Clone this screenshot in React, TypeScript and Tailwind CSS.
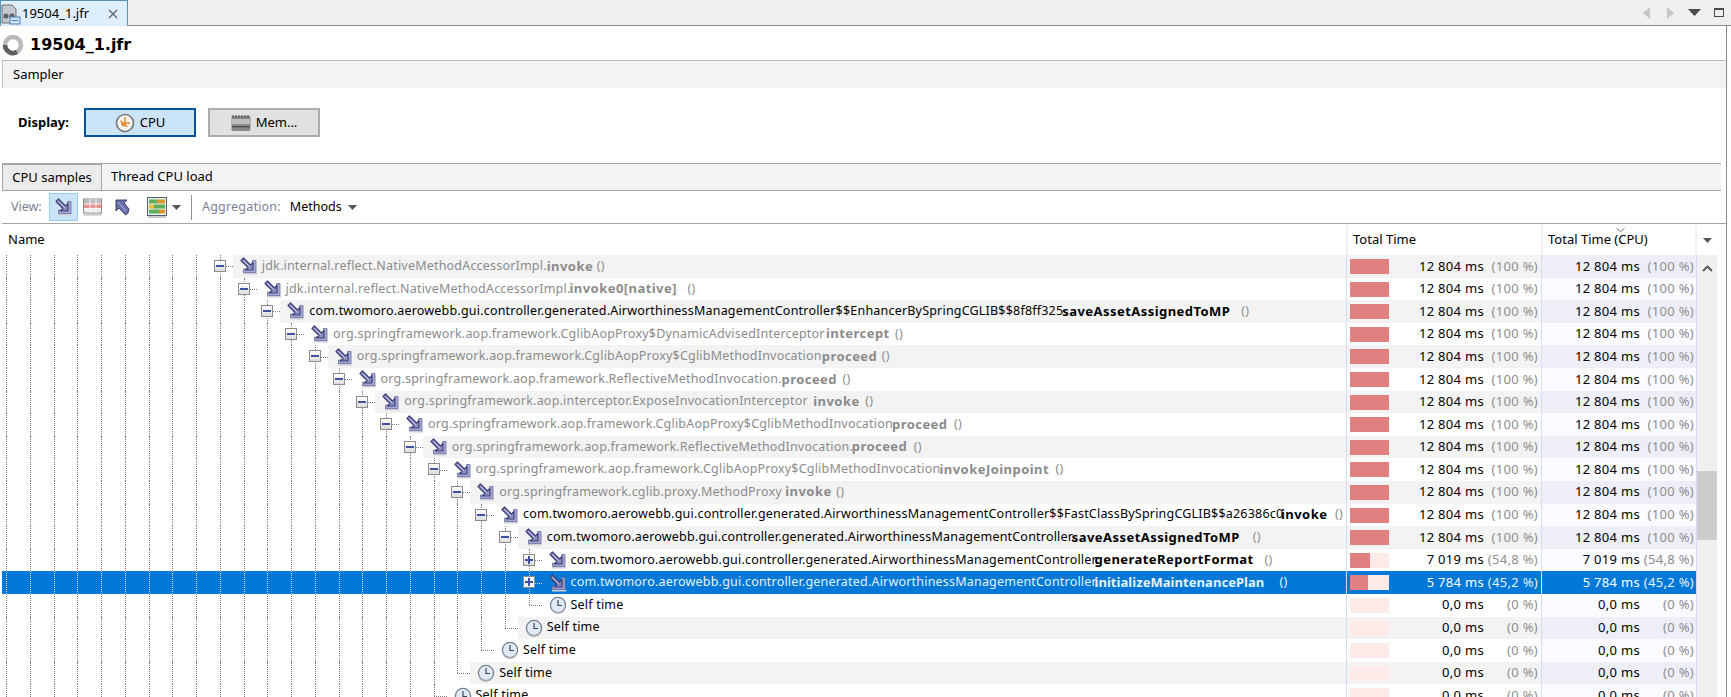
import React from 'react'

type Row = {
  level: number
  prefix?: string
  method?: string
  prefixW?: string
  methodW?: string
  dim?: boolean
  open?: boolean
  self?: boolean
  time?: string
  pct?: string
  fill?: string
}

const pkg = 'com.twomoro.aerowebb.gui.controller.generated.AirworthinessManagementController'
const aop = 'org.springframework.aop.framework.'

const rows: Row[] = [
  { level: 9, prefix: 'jdk.internal.reflect.NativeMethodAccessorImpl.', method: 'invoke', prefixW: 'w-[285px]', methodW: 'w-[50px]', dim: true, open: true },
  { level: 10, prefix: 'jdk.internal.reflect.NativeMethodAccessorImpl.', method: 'invoke0[native]', prefixW: 'w-[284px]', methodW: 'w-[118px]', dim: true, open: true },
  { level: 11, prefix: pkg + '$$EnhancerBySpringCGLIB$$8f8ff325', method: 'saveAssetAssignedToMP', prefixW: 'w-[753px]', methodW: 'w-[179px]', open: true },
  { level: 12, prefix: aop + 'CglibAopProxy$DynamicAdvisedInterceptor', method: 'intercept', prefixW: 'w-[493px]', methodW: 'w-[69px]', dim: true, open: true },
  { level: 13, prefix: aop + 'CglibAopProxy$CglibMethodInvocation', method: 'proceed', prefixW: 'w-[465px]', methodW: 'w-[60px]', dim: true, open: true },
  { level: 14, prefix: aop + 'ReflectiveMethodInvocation.', method: 'proceed', prefixW: 'w-[401px]', methodW: 'w-[61px]', dim: true, open: true },
  { level: 15, prefix: 'org.springframework.aop.interceptor.ExposeInvocationInterceptor', method: 'invoke', prefixW: 'w-[409px]', methodW: 'w-[52px]', dim: true, open: true },
  { level: 16, prefix: aop + 'CglibAopProxy$CglibMethodInvocation', method: 'proceed', prefixW: 'w-[464px]', methodW: 'w-[62px]', dim: true, open: true },
  { level: 17, prefix: aop + 'ReflectiveMethodInvocation.', method: 'proceed', prefixW: 'w-[400px]', methodW: 'w-[62px]', dim: true, open: true },
  { level: 18, prefix: aop + 'CglibAopProxy$CglibMethodInvocation', method: 'invokeJoinpoint', prefixW: 'w-[464px]', methodW: 'w-[116px]', dim: true, open: true },
  { level: 19, prefix: 'org.springframework.cglib.proxy.MethodProxy', method: 'invoke', prefixW: 'w-[286px]', methodW: 'w-[51px]', dim: true, open: true },
  { level: 20, prefix: pkg + '$$FastClassBySpringCGLIB$$a26386c0', method: 'invoke', prefixW: 'w-[758px]', methodW: 'w-[54px]', open: true },
  { level: 21, prefix: pkg + '.', method: 'saveAssetAssignedToMP', prefixW: 'w-[525px]', methodW: 'w-[181px]', open: true },
  { level: 22, prefix: pkg + '.', method: 'generateReportFormat', prefixW: 'w-[524px]', methodW: 'w-[170px]', time: '7 019 ms', pct: '(54,8 %)', fill: 'w-[20px]' },
  { level: 22, prefix: pkg + '.', method: 'initializeMaintenancePlan', prefixW: 'w-[524px]', methodW: 'w-[185px]', time: '5 784 ms', pct: '(45,2 %)', fill: 'w-[18px]' },
  { level: 22, self: true },
  { level: 21, self: true },
  { level: 20, self: true },
  { level: 19, self: true },
  { level: 18, self: true },
]

const MethodIcon = ({ hot = false }: { hot?: boolean }) => (
  <svg width="18" height="18" viewBox="0 0 18 18" className="shrink-0">
    <rect x="3" y="15.5" width="14" height="2" fill="#cfcfd8" />
    <path d="M16 3.5V15.5H3.5V12H12.5V3.5Z" fill={hot ? '#9a9dcc' : '#a7a9d2'} stroke="#6a6da3" strokeWidth="0.8" />
    <path d="M1 3.5L3.5 1L10.5 8L13 5.5V13H5.5L8 10.5Z" fill={hot ? '#7d80b8' : '#8a8dc0'} stroke="#3f4278" strokeWidth="1.2" strokeLinejoin="round" />
    <path d="M3.5 3.5L10 10" stroke="#c9cbe8" strokeWidth="1" />
  </svg>
)

const ClockIcon = () => (
  <svg width="18" height="18" viewBox="0 0 18 18" className="shrink-0">
    <circle cx="9" cy="9" r="7.6" fill="#dfeaf6" stroke="#78818e" strokeWidth="1.3" />
    <path d="M3 14a7.6 7.6 0 0 0 12 0" fill="none" stroke="#a8acb2" strokeWidth="1.5" />
    <path d="M9 4V9.5H13" fill="none" stroke="#3d4650" strokeWidth="1.2" />
  </svg>
)

const TreeBox = ({ open, selected }: { open?: boolean; selected?: boolean }) => (
  <span className={`absolute left-[-6px] top-[5px] w-[12px] h-[12px] border border-[#8c8c8c] flex items-center justify-center ${selected ? 'bg-white' : 'bg-gradient-to-b from-white to-[#dcdcdc]'}`}>
    <span className="relative block w-[8px] h-[2px] bg-[#3f51a0]">
      {!open && <span className="absolute left-[3px] top-[-3px] w-[2px] h-[8px] bg-[#3f51a0]" />}
    </span>
  </span>
)

const Bar = ({ fill }: { fill: string }) => (
  <div className="absolute left-[3px] top-[4px] w-[39px] h-[15px] bg-[#ffeaea]">
    <div className={`h-full bg-[#e08080] ${fill}`} />
  </div>
)

const TreeRow = ({ row, index }: { row: Row; index: number }) => {
  const selected = index === 14
  const stripe = index % 2 === 0
  const time = row.time ?? (row.self ? '0,0 ms' : '12 804 ms')
  const pct = row.pct ?? (row.self ? '(0 %)' : '(100 %)')
  const fill = row.fill ?? (row.self ? 'w-0' : 'w-full')
  const nameBg = selected ? 'bg-[#0078d7]' : stripe ? 'bg-[#f3f3f3]' : 'bg-white'
  const line = selected ? 'border-[#cfe0f2]' : 'border-[#7d7d7d]'
  const textColor = selected ? 'text-[#e6f2fc]' : row.dim ? 'text-[#8b8b8b]' : 'text-black'
  const numColor = selected ? 'text-white' : 'text-black'
  const pctColor = selected ? 'text-[#e6f2fc]' : 'text-[#8e8e8e]'

  return (
    <div className={`flex h-[22.6px] ${selected ? 'bg-[#0078d7]' : ''}`}>
      <div className="flex w-[1344px] shrink-0 overflow-hidden pl-[4px]">
        {Array.from({ length: row.level }).map((_, i) => (
          <span key={i} className={`w-[23.75px] shrink-0 border-l border-dotted ${line}`} />
        ))}
        <span className="relative w-[13px] shrink-0">
          <span className={`absolute left-0 top-0 border-l border-dotted ${line} ${row.self ? 'h-1/2' : 'h-full'}`} />
          <span className={`absolute left-0 top-1/2 w-[13px] border-t border-dotted ${line}`} />
          {!row.self && <TreeBox open={row.open} selected={selected} />}
        </span>
        <div className={`flex flex-1 items-center pl-[7px] whitespace-nowrap text-[12.5px] tracking-[0.2px] ${nameBg} ${textColor}`}>
          <span className="w-[22px] shrink-0">{row.self ? <ClockIcon /> : <MethodIcon hot={selected} />}</span>
          {row.self ? (
            <span>Self time</span>
          ) : (
            <>
              <span className={`shrink-0 ${row.prefixW}`}>{row.prefix}</span>
              <span className={`shrink-0 text-[13px] font-bold ${selected ? 'tracking-[0.05px]' : 'tracking-[0.45px]'} ${row.methodW}`}>{row.method}</span>
              <span className={`shrink-0 ${selected ? 'text-[#e6f2fc]' : 'text-[#8e8e8e]'}`}>()</span>
            </>
          )}
        </div>
      </div>
      <div className={`relative flex w-[195px] shrink-0 items-center justify-end border-l border-[#d6dbf6] text-[13px] pr-[2px] ${nameBg}`}>
        <Bar fill={fill} />
        <span className={`whitespace-nowrap tracking-[0.3px] ${numColor}`}>{time}</span>
        <span className={`w-[55px] text-right pr-[1px] whitespace-nowrap tracking-[0.3px] ${pctColor}`}>{pct}</span>
      </div>
      <div className={`flex w-[156px] shrink-0 items-center justify-end border-x border-[#d6dbf6] text-[13px] pr-[1px] ${selected ? 'bg-[#0078d7]' : stripe ? 'bg-[#eeeef8]' : 'bg-[#fafaff]'}`}>
        <span className={`whitespace-nowrap tracking-[0.3px] ${numColor}`}>{time}</span>
        <span className={`w-[55px] text-right pr-[1px] whitespace-nowrap tracking-[0.3px] ${pctColor}`}>{pct}</span>
      </div>
    </div>
  )
}

const Caret = ({ className = '' }: { className?: string }) => (
  <svg width="9" height="5" viewBox="0 0 9 5" className={className}>
    <path d="M0 0H9L4.5 5Z" fill="#555" />
  </svg>
)

export default function App() {
  return (
    <div className="relative h-[697px] w-[1731px] overflow-hidden bg-white font-['Noto_Sans',sans-serif] text-[13px] text-black">
      {/* Editor tab strip */}
      <div className="flex h-[26px] items-stretch justify-between border-b border-[#8a8a94] bg-[#efefef]">
        <div className="flex h-[26px] w-[128px] items-center border border-b-0 border-[#5a93b8] bg-[#dfeefb]">
          <svg width="20" height="22" viewBox="0 0 20 22" className="shrink-0">
            <path d="M1 2H11L15 6V20H1Z" fill="#c4c8cc" stroke="#6f7479" />
            <circle cx="5" cy="13" r="2.6" fill="#5d6670" />
            <circle cx="11" cy="13" r="2.6" fill="#5d6670" />
            <rect x="9" y="14" width="10" height="7" fill="#cfe3f7" stroke="#4f7fae" />
            <path d="M11 17.5H17" stroke="#4f7fae" />
          </svg>
          <span className="ml-[1px] text-[13px]">19504_1.jfr</span>
          <svg width="10" height="10" viewBox="0 0 10 10" className="ml-[19px]">
            <path d="M1 1L9 9M9 1L1 9" stroke="#666" strokeWidth="1.4" />
          </svg>
        </div>
        <div className="flex items-center gap-[13px] pr-[7px]">
          <svg width="10" height="14" viewBox="0 0 10 14"><path d="M8 1V13L1 7Z" fill="#c6c6c6" /></svg>
          <svg width="10" height="14" viewBox="0 0 10 14"><path d="M2 1V13L9 7Z" fill="#c6c6c6" /></svg>
          <svg width="13" height="7" viewBox="0 0 13 7"><path d="M0 0H13L6.5 7Z" fill="#4a4a4a" /></svg>
          <span className="h-[9px] w-[10px] border border-t-2 border-[#4a4a4a]" />
        </div>
      </div>

      <div className="mr-[4px] h-[671px] border-r border-[#8a8a94]">
        {/* Title */}
        <div className="flex h-[34px] items-center pl-[2px] pt-[4px]">
          <svg width="22" height="22" viewBox="0 0 22 22">
            <circle cx="11" cy="11" r="8" fill="none" stroke="#b9b9b9" strokeWidth="4.5" />
            <path d="M3 11A8 8 0 0 0 15 18" fill="none" stroke="#5f5f5f" strokeWidth="4.5" />
          </svg>
          <span className="ml-[6px] font-['DejaVu_Sans',sans-serif] text-[16px] font-bold">19504_1.jfr</span>
        </div>

        {/* Sampler section */}
        <div className="ml-[2px] flex h-[28px] items-center border-l border-t border-[#bcbcbc] bg-[#f3f3f3] pl-[10px]">Sampler</div>

        {/* Display buttons */}
        <div className="flex h-[75px] items-start pt-[20px]">
          <span className="ml-[18px] flex h-[29px] w-[66px] items-center font-bold">Display:</span>
          <button className="flex h-[29px] w-[112px] items-center justify-center gap-[5px] border-2 border-[#005499] bg-[#cce4f7]">
            <svg width="20" height="20" viewBox="0 0 20 20">
              <circle cx="10" cy="10" r="8.5" fill="#f4f4f0" stroke="#777" strokeWidth="1.6" />
              <path d="M10 10L5 7L7 13L13 14Z" fill="#e58a2e" />
              <path d="M10 4V10H15" fill="none" stroke="#e58a2e" strokeWidth="1.5" />
            </svg>
            <span>CPU</span>
          </button>
          <button className="ml-[12px] flex h-[29px] w-[112px] items-center justify-center gap-[5px] border-2 border-[#adadad] bg-[#e1e1e1]">
            <svg width="20" height="20" viewBox="0 0 20 20">
              <rect x="0.5" y="3" width="19" height="15" rx="1.5" fill="#8a8a8a" />
              <path d="M2 2V5M5 2V5M8 2V5M11 2V5M14 2V5M17 2V5" stroke="#5c5c5c" strokeWidth="1.2" />
              <rect x="1" y="6" width="18" height="5" fill="#bdbdbd" />
              <rect x="1" y="13" width="18" height="1.4" fill="#4f4f4f" />
            </svg>
            <span>Mem...</span>
          </button>
        </div>

        {/* Sub tabs */}
        <div className="ml-[2px] mr-[5px] flex h-[28px] border-y border-[#a5a5a5] bg-[#f3f3f3]">
          <div className="-mt-px flex w-[100px] items-center justify-center border-x border-t-2 border-[#a5a5a5] bg-[#ebebeb]">CPU samples</div>
          <div className="flex items-center pl-[9px]">Thread CPU load</div>
        </div>

        {/* Toolbar */}
        <div className="ml-[2px] flex h-[33px] items-center border-b border-[#a5a5a5] text-[12.5px]">
          <span className="ml-[9px] w-[38px] text-[#7a7f92]">View:</span>
          <span className="flex h-[28px] w-[29px] items-center justify-center border border-[#99ccf5] bg-[#cce4f7]">
            <MethodIcon />
          </span>
          <svg width="19" height="18" viewBox="0 0 19 18" className="ml-[5px]">
            <rect x="0.5" y="1" width="18" height="14" fill="#eee" stroke="#8a8a8a" />
            <rect x="1" y="1.5" width="17" height="4" fill="#bdbdbd" />
            <rect x="1" y="5.5" width="17" height="5" fill="#ee8f8f" />
            <path d="M7 1V15M13 1V15M1 6H18M1 10.5H18" stroke="#f5f5f5" />
            <rect x="0.5" y="15" width="18" height="2.5" fill="#c6c6c6" />
          </svg>
          <svg width="17" height="18" viewBox="0 0 17 18" className="ml-[11px]">
            <path d="M15 15L12.5 17L6 10L3 13V2H14L11 5L16 11Z" fill="#6a6fa8" stroke="#3e4276" strokeLinejoin="round" />
            <path d="M5 4L13 13" stroke="#b9bbe0" />
          </svg>
          <svg width="20" height="21" viewBox="0 0 20 21" className="ml-[17px]">
            <rect x="0.5" y="0.5" width="19" height="18" fill="#e6eef0" stroke="#55606b" />
            <rect x="2" y="2.5" width="8" height="4" fill="#5fae5a" />
            <rect x="10" y="2.5" width="8" height="4" fill="#d9962c" />
            <rect x="2" y="7.5" width="5" height="4" fill="#e2c23e" />
            <rect x="7" y="7.5" width="11" height="4" fill="#5fae5a" />
            <rect x="2" y="12.5" width="10" height="4" fill="#5fae5a" />
            <rect x="12" y="12.5" width="6" height="4" fill="#d9962c" />
            <rect x="1" y="19" width="18" height="2" fill="#c9c9c9" />
          </svg>
          <Caret className="ml-[5px]" />
          <span className="ml-[10px] h-[25px] border-l border-[#8f8f8f]" />
          <span className="ml-[10px] text-[#7a7f92] tracking-[0.2px]">Aggregation:</span>
          <span className="ml-[9px]">Methods</span>
          <Caret className="ml-[6px]" />
        </div>

        {/* Table header */}
        <div className="ml-[2px] flex h-[31px] items-center pt-[1px]">
          <span className="w-[1344px] pl-[6px]">Name</span>
          <span className="flex h-full w-[195px] items-center border-l-2 border-[#f0f0f0] pl-[5px]">Total Time</span>
          <span className="relative flex h-full w-[156px] items-center border-x-2 border-[#f0f0f0] pl-[5px]">
            Total Time (CPU)
            <svg width="9" height="4" viewBox="0 0 9 4" className="absolute left-[73px] top-[3px]">
              <path d="M0.5 0.5L4.5 3.5L8.5 0.5" fill="none" stroke="#777" />
            </svg>
          </span>
          <span className="flex w-[20px] justify-center"><Caret /></span>
        </div>

        {/* Tree table with scrollbar */}
        <div className="ml-[2px] flex">
          <div className="w-[1695px] shrink-0">
            {rows.map((row, i) => (
              <TreeRow key={i} row={row} index={i} />
            ))}
          </div>
          <div className="flex h-[443px] w-[20px] shrink-0 flex-col bg-[#f0f0f0]">
            <span className="flex h-[26px] items-center justify-center">
              <svg width="11" height="7" viewBox="0 0 11 7"><path d="M1 6L5.5 1.5L10 6" fill="none" stroke="#555" strokeWidth="1.8" /></svg>
            </span>
            <span className="mt-[190px] h-[69px] bg-[#cdcdcd]" />
          </div>
        </div>
      </div>
    </div>
  )
}
